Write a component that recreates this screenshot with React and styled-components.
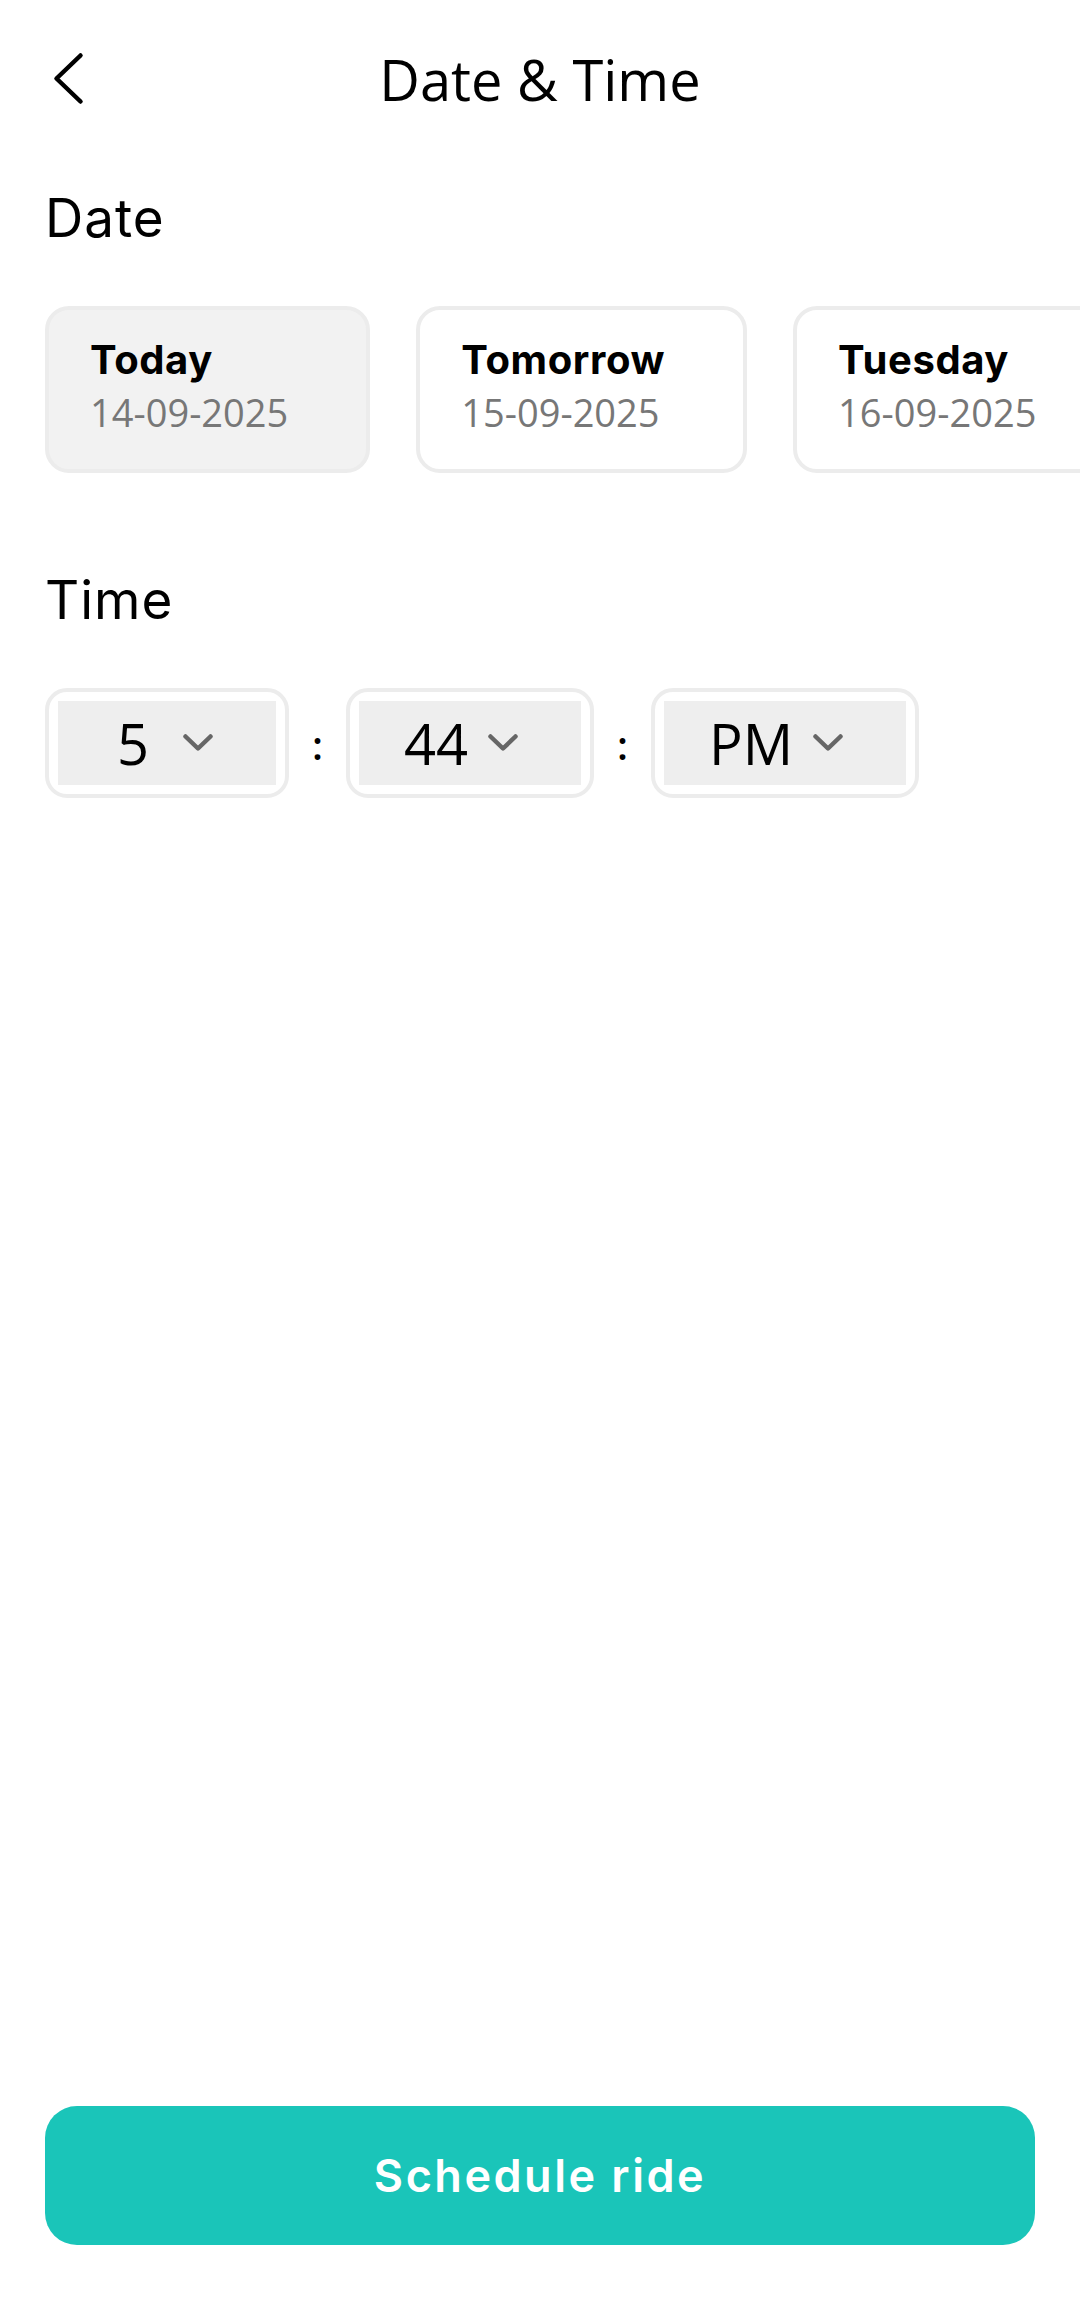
import React from "react";
import styled, { createGlobalStyle } from "styled-components";

const GlobalStyle = createGlobalStyle`
  html, body {
    margin: 0;
    padding: 0;
    background: #ffffff;
  }
  * { box-sizing: border-box; }
`;

const Page = styled.div`
  width: 1080px;
  min-height: 2318px;
  display: flex;
  flex-direction: column;
  background: #ffffff;
  overflow: hidden;
`;

const Header = styled.header`
  height: 158px;
  display: grid;
  grid-template-columns: 1fr auto 1fr;
  align-items: center;
`;

const BackButton = styled.button`
  justify-self: start;
  margin-left: 50px;
  padding: 0;
  border: none;
  background: none;
  display: flex;
  width: 36px;
  height: 58px;
  cursor: pointer;
`;

const Title = styled.h1`
  margin: 0;
  font-family: "Open Sans", "Noto Sans", sans-serif;
  font-weight: 400;
  font-size: 56px;
  line-height: 1;
  color: #000;
`;

const SectionLabel = styled.h2`
  margin: ${(p) => p.$top}px 0 0 45px;
  font-family: Inter, "Noto Sans", sans-serif;
  font-weight: 400;
  font-size: 53px;
  letter-spacing: 1px;
  line-height: 1;
  color: #000;
`;

const CardRow = styled.div`
  margin-top: 61px;
  display: flex;
  gap: 46px;
  padding-left: 45px;
  overflow: hidden;
`;

const DateCard = styled.div`
  flex: none;
  height: 167px;
  display: flex;
  flex-direction: column;
  justify-content: center;
  padding: 0 78px 8px 41px;
  border: 4px solid #ececec;
  border-radius: 24px;
  background: ${(p) => (p.$selected ? "#f2f2f2" : "#ffffff")};
`;

const DayName = styled.span`
  font-family: Inter, "Noto Sans", sans-serif;
  font-weight: 700;
  font-size: 40px;
  letter-spacing: 0.6px;
  line-height: 52px;
  color: #000;
`;

const DateText = styled.span`
  font-family: "Open Sans", "Noto Sans", sans-serif;
  font-weight: 400;
  font-size: 38px;
  line-height: 52px;
  color: #777777;
`;

const TimeRow = styled.div`
  margin-top: 61px;
  padding-left: 45px;
  display: flex;
  align-items: center;
`;

const SelectFrame = styled.div`
  padding: 9px;
  border: 4px solid #ececec;
  border-radius: 22px;
  background: #ffffff;
`;

const SelectInner = styled.div`
  height: 84px;
  display: flex;
  align-items: center;
  gap: 20px;
  padding: 0 63px 0 45px;
  background: #eeeeee;
`;

const SelectValue = styled.span`
  min-width: 60px;
  text-align: center;
  font-family: "Open Sans", "Noto Sans", sans-serif;
  font-weight: 400;
  font-size: 56px;
  line-height: 1;
  color: #000;
`;

const Colon = styled.span`
  width: 57px;
  text-align: center;
  font-family: "Open Sans", "Noto Sans", sans-serif;
  font-weight: 600;
  font-size: 40px;
  line-height: 1;
  color: #000;
  padding-top: 4px;
`;

const ScheduleButton = styled.button`
  margin: auto 45px 73px;
  height: 139px;
  border: none;
  border-radius: 32px;
  background: #1ac5b9;
  color: #ffffff;
  font-family: Inter, "Noto Sans", sans-serif;
  font-weight: 600;
  font-size: 45px;
  letter-spacing: 2.5px;
  cursor: pointer;
`;

const BackIcon = () => (
  <svg width="36" height="58" viewBox="0 0 36 58" fill="none">
    <path
      d="M30.5 5.5 L6.5 28.5 L30.5 51.5"
      stroke="#000"
      strokeWidth="4.5"
      strokeLinecap="round"
      strokeLinejoin="round"
    />
  </svg>
);

const ChevronDown = () => (
  <svg width="30" height="18" viewBox="0 0 30 18" fill="none">
    <path
      d="M2.5 2.5 L15 14.5 L27.5 2.5"
      stroke="#666"
      strokeWidth="4.5"
      strokeLinecap="round"
      strokeLinejoin="round"
    />
  </svg>
);

const dates = [
  { day: "Today", date: "14-09-2025", selected: true },
  { day: "Tomorrow", date: "15-09-2025" },
  { day: "Tuesday", date: "16-09-2025" },
];

const Select = ({ value }) => (
  <SelectFrame>
    <SelectInner>
      <SelectValue>{value}</SelectValue>
      <ChevronDown />
    </SelectInner>
  </SelectFrame>
);

export default function App() {
  return (
    <>
      <GlobalStyle />
      <Page>
        <Header>
          <BackButton aria-label="Back">
            <BackIcon />
          </BackButton>
          <Title>Date &amp; Time</Title>
          <span />
        </Header>

        <SectionLabel $top={34}>Date</SectionLabel>
        <CardRow>
          {dates.map((d) => (
            <DateCard key={d.day} $selected={d.selected}>
              <DayName>{d.day}</DayName>
              <DateText>{d.date}</DateText>
            </DateCard>
          ))}
        </CardRow>

        <SectionLabel $top={101}>Time</SectionLabel>
        <TimeRow>
          <Select value="5" />
          <Colon>:</Colon>
          <Select value="44" />
          <Colon>:</Colon>
          <Select value="PM" />
        </TimeRow>

        <ScheduleButton>Schedule ride</ScheduleButton>
      </Page>
    </>
  );
}
